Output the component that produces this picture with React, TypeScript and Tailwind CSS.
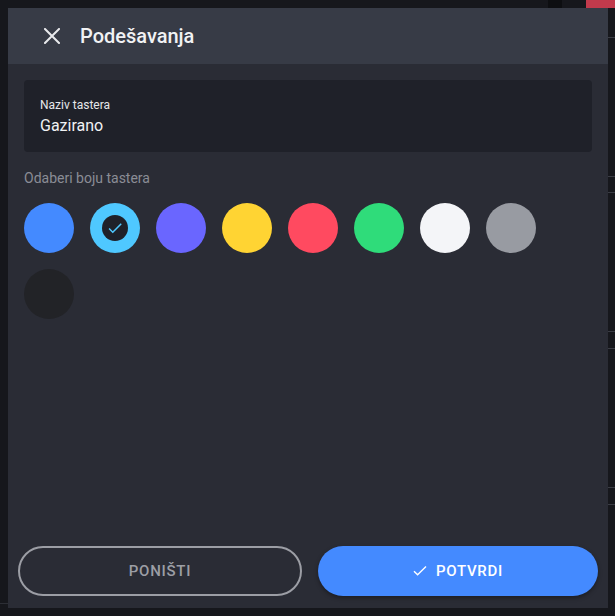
import React from "react";

const swatches = [
  "bg-[#448aff]",
  "bg-[#4fc8ff]",
  "bg-[#6a66ff]",
  "bg-[#ffd433]",
  "bg-[#ff4a60]",
  "bg-[#2fdc7a]",
  "bg-[#f4f5f8]",
  "bg-[#989ba2]",
  "bg-[#222327]",
];

export default function App() {
  return (
    <div
      className="relative w-[615px] h-[616px] overflow-hidden bg-[#16171c]"
      style={{ fontFamily: "Roboto, 'Noto Sans', sans-serif" }}
    >
      {/* background app remnants */}
      <div className="absolute right-0 top-0 w-[29px] h-[8px] bg-[#c23a4c]" />
      <div className="absolute left-[548px] top-0 w-[14px] h-[8px] bg-[#0d0e11]" />
      <div className="absolute right-0 top-[37px] w-[7px] h-px bg-[#3a3c44]" />
      <div className="absolute right-0 top-[176px] w-[7px] h-px bg-[#3a3c44]" />
      <div className="absolute right-0 top-[192px] w-[7px] h-px bg-[#3a3c44]" />
      <div className="absolute right-0 top-[331px] w-[7px] h-px bg-[#3a3c44]" />
      <div className="absolute right-0 top-[348px] w-[7px] h-px bg-[#3a3c44]" />
      <div className="absolute right-0 top-[487px] w-[7px] h-px bg-[#3a3c44]" />
      <div className="absolute right-0 top-[504px] w-[7px] h-px bg-[#3a3c44]" />
      <div className="absolute left-0 top-[603px] w-[8px] h-px bg-[#2c2e35]" />

      <div className="absolute left-[8px] top-[8px] w-[600px] h-[600px] flex flex-col bg-[#2a2c35]">
        {/* header */}
        <div className="h-14 shrink-0 bg-[#373b46] flex items-center pl-9 gap-5">
          <svg width="16" height="16" viewBox="0 0 16 16" className="text-[#e8e9ec]">
            <path d="M1 1L15 15M15 1L1 15" stroke="currentColor" strokeWidth="2" strokeLinecap="square" />
          </svg>
          <span className="text-[20px] leading-7 font-medium text-[#f1f2f4]">Podešavanja</span>
        </div>

        {/* body */}
        <div className="flex-1 flex flex-col px-4 pt-4">
          <div className="h-[72px] bg-[#1f2129] rounded-sm px-4 pt-[17px] flex flex-col">
            <span className="text-[12px] leading-4 text-[#e6e7ea]">Naziv tastera</span>
            <span className="text-[16px] leading-6 mt-px text-[#f1f2f4]">Gazirano</span>
          </div>

          <div className="mt-4 text-[14px] leading-5 text-[#8a8d95]">Odaberi boju tastera</div>

          <div className="mt-[15px] flex flex-wrap gap-4">
            {swatches.map((c, i) => (
              <div key={i} className={`w-[50px] h-[50px] rounded-full flex items-center justify-center ${c}`}>
                {i === 1 && (
                  <div className="w-[26px] h-[26px] rounded-full bg-[#1f2129] flex items-center justify-center">
                    <svg width="18" height="18" viewBox="0 0 24 24" className="text-[#4fc8ff]">
                      <path fill="currentColor" d="M9 16.17L4.83 12l-1.42 1.41L9 19 21 7l-1.41-1.41z" />
                    </svg>
                  </div>
                )}
              </div>
            ))}
          </div>
        </div>

        {/* footer */}
        <div className="shrink-0 flex gap-4 px-[10px] pb-3">
          <button className="flex-1 h-[50px] rounded-full border-2 border-[#9c9ea5] text-[#9c9ea5] text-[15px] font-medium tracking-[0.05em] flex items-center justify-center">
            PONIŠTI
          </button>
          <button className="flex-1 h-[50px] rounded-full bg-[#448aff] text-white text-[15px] font-medium tracking-[0.05em] flex items-center justify-center gap-[9px] shadow-[0_2px_4px_rgba(0,0,0,0.35)]">
            <svg width="14" height="10" viewBox="0 0 14 10">
              <path d="M1 5.2L4.6 8.8L13 0.6" fill="none" stroke="white" strokeWidth="1.4" />
            </svg>
            POTVRDI
          </button>
        </div>
      </div>
    </div>
  );
}
